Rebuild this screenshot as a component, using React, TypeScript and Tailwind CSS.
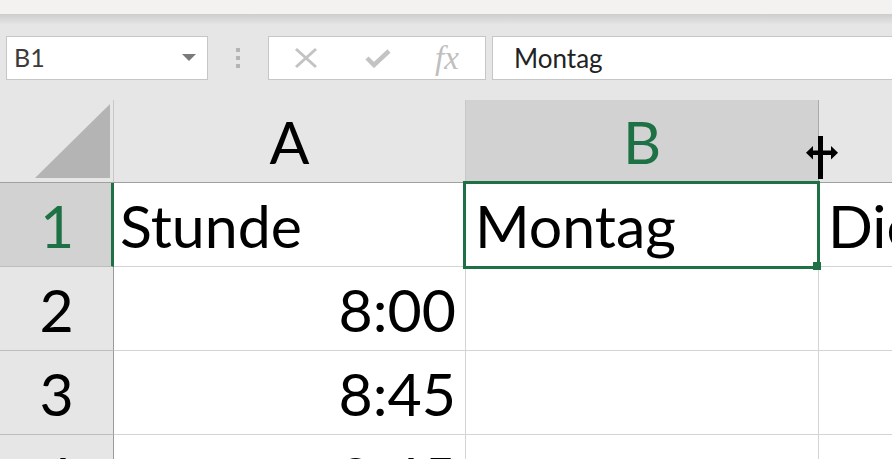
import React from "react";

const font = "font-['Lato','Noto_Sans',sans-serif]";

function ColumnResizeCursor() {
  return (
    <svg width="36" height="46" viewBox="0 0 36 46" className="absolute left-[804px] top-[135px]">
      <rect x="14" y="1" width="5" height="43" fill="#000" />
      <rect x="5" y="15.5" width="24" height="4.5" fill="#000" />
      <polygon points="2,17.75 9,11 9,24.5" fill="#000" />
      <polygon points="34,17.75 27,11 27,24.5" fill="#000" />
    </svg>
  );
}

function FormulaBar() {
  return (
    <div className="flex h-[44px] items-stretch">
      <div className="ml-[6px] flex w-[202px] items-center justify-between border border-[#c6c6c6] bg-white pl-[7px] pr-[11px]">
        <span className={`${font} text-[25px] text-[#3b3b3b]`}>B1</span>
        <svg width="14" height="8" viewBox="0 0 14 8">
          <polygon points="0,0 14,0 7,7" fill="#7a7a7a" />
        </svg>
      </div>
      <div className="flex w-[60px] flex-col items-center justify-center gap-[4px]">
        <div className="h-[4px] w-[4px] bg-[#b4b4b4]" />
        <div className="h-[4px] w-[4px] bg-[#b4b4b4]" />
        <div className="h-[4px] w-[4px] bg-[#b4b4b4]" />
      </div>
      <div className="flex w-[218px] items-center border border-[#c6c6c6] bg-white">
        <svg width="24" height="22" viewBox="0 0 24 22" className="ml-[25px]">
          <path d="M2 2 L22 20 M22 2 L2 20" stroke="#c3c3c3" strokeWidth="3" />
        </svg>
        <svg width="26" height="20" viewBox="0 0 26 20" className="ml-[47px]">
          <path d="M2 10 L9 17 L24 3" stroke="#c3c3c3" strokeWidth="4.5" fill="none" />
        </svg>
        <span className="ml-[44px] font-['Liberation_Serif',serif] text-[33px] italic leading-none text-[#bfbfbf]">
          fx
        </span>
      </div>
      <div className="ml-[6px] flex flex-1 items-center border border-r-0 border-[#c6c6c6] bg-white pl-[21px]">
        <span className={`${font} text-[26px] text-[#222]`}>Montag</span>
      </div>
    </div>
  );
}

function HeaderRow() {
  return (
    <div className="flex h-[83px] border-b border-[#a0a0a0]">
      <div className="relative w-[114px] shrink-0 border-r border-[#c8c8c8]">
        <svg width="113" height="82" viewBox="0 0 113 82" className="absolute left-0 top-0">
          <polygon points="35,78 110,4 110,78" fill="#b4b4b4" />
        </svg>
      </div>
      <div className="flex w-[352px] shrink-0 items-end justify-center border-r border-[#c8c8c8] pb-[11px]">
        <span className="leading-none text-black">A</span>
      </div>
      <div className="flex w-[353px] shrink-0 items-end justify-center border-r border-[#ababab] bg-[#d2d2d2] pb-[11px]">
        <span className="leading-none text-[#1e7145]">B</span>
      </div>
      <div className="flex-1" />
    </div>
  );
}

type RowProps = {
  n: number;
  a?: string;
  b?: string;
  c?: string;
  alignA?: "left" | "right";
  selected?: boolean;
};

function Row({ n, a, b, c, alignA = "left", selected }: RowProps) {
  return (
    <div className="flex h-[84px] shrink-0">
      <div
        className={
          selected
            ? "flex w-[114px] shrink-0 items-end justify-center border-b border-r-[3px] border-b-[#bdbdbd] border-r-[#1e7145] bg-[#d2d2d2] pb-[11px] pl-[3px]"
            : "flex w-[114px] shrink-0 items-end justify-center border-b border-r border-b-[#bdbdbd] border-r-[#9b9b9b] bg-[#e6e6e6] pb-[11px]"
        }
      >
        <span className={selected ? "leading-none text-[#1e7145]" : "leading-none text-black"}>{n}</span>
      </div>
      <div
        className={
          alignA === "right"
            ? "flex w-[352px] shrink-0 items-end justify-end border-b border-r border-[#d4d4d4] bg-white pb-[11px] pr-[9px]"
            : "flex w-[352px] shrink-0 items-end justify-start border-b border-r border-[#d4d4d4] bg-white pb-[11px] pl-[6px]"
        }
      >
        <span className="leading-none text-black">{a}</span>
      </div>
      <div className="flex w-[353px] shrink-0 items-end border-b border-r border-[#d4d4d4] bg-white pb-[11px] pl-[9px]">
        <span className="leading-none text-black">{b}</span>
      </div>
      <div className="flex flex-1 items-end overflow-hidden whitespace-nowrap border-b border-[#d4d4d4] bg-white pb-[11px] pl-[9px]">
        <span className="leading-none text-black">{c}</span>
      </div>
    </div>
  );
}

export default function App() {
  return (
    <div className={`relative h-[459px] w-[892px] overflow-hidden bg-[#e6e6e6] ${font}`}>
      <div className="h-[14px] bg-[#f3f2f1]" />
      <div className="h-[10px] bg-gradient-to-b from-[#cdcdcd] to-[#e4e4e4]" />
      <div className="pt-[12px]">
        <FormulaBar />
      </div>
      <div className="mt-[20px] flex flex-col text-[59px]">
        <HeaderRow />
        <Row n={1} a="Stunde" b="Montag" c="Dienstag" selected />
        <Row n={2} a="8:00" alignA="right" />
        <Row n={3} a="8:45" alignA="right" />
        <Row n={4} a="9:45" alignA="right" />
      </div>
      {/* selection frame around B1 */}
      <div className="absolute left-[463px] top-[181px] h-[88px] w-[357px] border-[3px] border-[#1e7145]" />
      <div className="absolute left-[813px] top-[262px] h-[8px] w-[8px] bg-[#1e7145]" />
      <ColumnResizeCursor />
    </div>
  );
}
